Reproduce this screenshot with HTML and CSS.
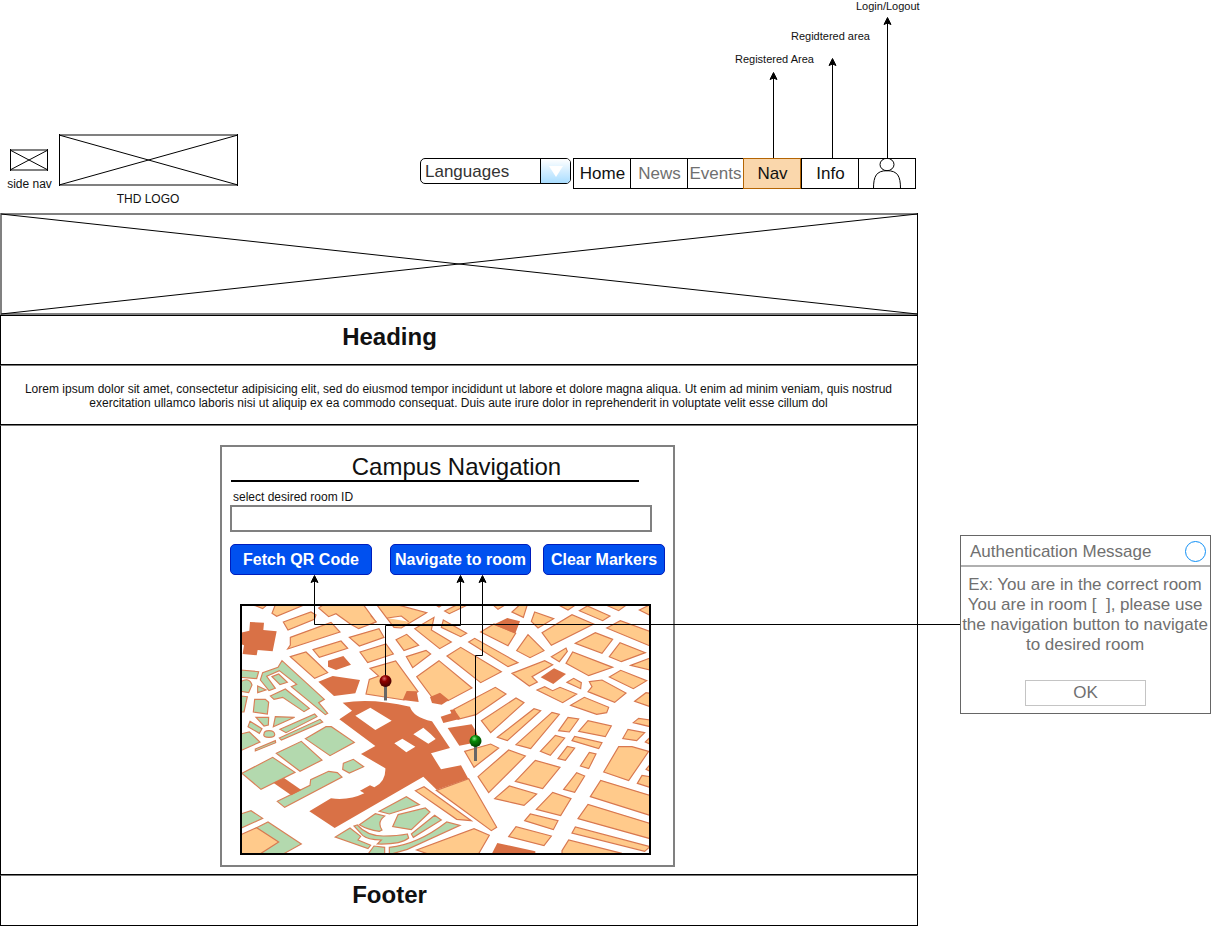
FILE: index.html
```
<!DOCTYPE html>
<html lang="en">
<head>
<meta charset="utf-8">
<title>Campus Navigation</title>
<link rel="stylesheet" href="styles.css">
</head>
<body>
<div class="canvas">
  <div class="site">
    <header class="header">
      <figure class="side-nav">
        <svg width="40" height="24" viewBox="0 0 40 24"><path class="edge" d="M1 2H39M1 22H39"/><path class="line" d="M1.500 1V23M38.500 1V23M1 2L39 22M39 2L1 22"/></svg>
        <figcaption>side nav</figcaption>
      </figure>
      <figure class="logo">
        <svg width="180" height="53" viewBox="0 0 180 53"><path class="edge" d="M0 2H179M0 52H179"/><path class="line" d="M.5 1V53M178.500 1V53M0 2L179 52M179 2L0 52"/></svg>
        <figcaption>THD LOGO</figcaption>
      </figure>
      <div class="select"><span class="select-value">Languages</span><span class="select-arrow"><svg width="14" height="11" viewBox="0 0 14 11"><path d="M0 0H14L7 11Z" fill="#fff"/></svg></span></div>
      <nav class="nav">
        <a class="item">Home</a>
        <a class="item muted">News</a>
        <a class="item muted events">Events</a>
        <a class="item active">Nav</a>
        <a class="item info">Info</a>
        <a class="item user"><svg width="29" height="31" viewBox="0 0 29 31"><ellipse class="line" cx="14" cy="6.500" rx="7" ry="6.200"/><path class="line" d="M.5 30.500C.5 18 3.500 12.700 14 12.700S27.500 18 27.500 30.500"/></svg></a>
      </nav>
    </header>
    <svg class="banner" width="918" height="102" viewBox="0 0 918 102"><path class="edge" d="M0 1H918M0 101H918"/><path class="edge" d="M1 0V102"/><path class="line" d="M917.500 0V102M1 1L917 101M917 1L1 101"/></svg>
    <h1 class="heading">Heading</h1>
    <p class="intro">Lorem ipsum dolor sit amet, consectetur adipisicing elit, sed do eiusmod tempor incididunt ut labore et dolore magna aliqua. Ut enim ad minim veniam, quis nostrud<br>exercitation ullamco laboris nisi ut aliquip ex ea commodo consequat. Duis aute irure dolor in reprehenderit in voluptate velit esse cillum dol</p>
    <main class="main">
      <section class="panel">
        <h2 class="title">Campus Navigation</h2>
        <label class="label">select desired room ID</label>
        <div class="field"></div>
        <div class="buttons">
          <button class="btn fetch">Fetch QR Code</button>
          <button class="btn navigate">Navigate to room</button>
          <button class="btn clear">Clear Markers</button>
        </div>
        <svg class="map" width="411" height="251" viewBox="240 604 411 251">
          <rect x="240" y="604" width="411" height="251" fill="#fff"/>
          <g transform="translate(236 600) scale(.33333)">
            <path class="land" d="M50 14L80 26 94 14ZM118 14L108 40 122 49 206 14ZM142 66L225 36 240 45 235 58 156 90ZM163 112L285 67 312 96 155 147 163 135ZM262 14L248 24 278 50 300 41 343 72 368 86 420 66 382 14ZM340 112L429 86 444 112 370 138ZM231 149L315 123 335 145 250 172ZM372 156L450 132 472 162 395 188ZM163 170L210 156 275 218 236 235Z"/>
            <path class="brown" d="M42 66L84 68 82 90 122 94 110 154 65 150 62 166 20 162 24 136 14 132 14 98 40 92ZM276 182L322 168 345 194 300 210 276 200ZM247 245L290 228 372 240 358 280 294 288Z"/>
            <path class="green" fill-rule="evenodd" d="M138 182L265 298 248 308 275 340 268 344 166 260 182 253 130 212 92 229 118 265 99 272 73 240 80 218 126 202ZM108 230L128 222 154 247 132 254ZM14 210L68 215 62 236 14 232ZM14 245Q40 230 48 255L38 278 14 274ZM65 258L90 270 65 278ZM14 288L34 290 24 336 14 336ZM103 288L148 267 220 325 204 335 140 292 114 298ZM56 298L88 298 98 307 94 342 52 336ZM60 352L98 352 97 375 84 378ZM118 350L176 352 112 380ZM42 364L78 386 70 400 36 380ZM132 388L236 342 243 350 150 398ZM130 414L252 358 260 366 136 420Z"/>
          </g>
          <g transform="translate(374 600) scale(.33333)">
            <path class="land" d="M8 14L35 50 60 82 82 84 158 38 68 14ZM40 54L82 48 104 65M-10 46L6 65 -10 72M66 119L98 103 134 136 90 152ZM122 86L180 52 172 90 232 126 197 146ZM208 60L278 100 260 110 202 82ZM212 33L250 14 282 14 226 41ZM184 14L195 21 206 14ZM97 170L156 151 170 162 116 203ZM-12 205L65 183 132 275 90 300 -24 282 -14 238 14 228ZM128 230L195 182 294 264 222 302 174 292ZM219 168L260 142 382 215 320 248ZM284 126L302 115 432 188 402 200ZM320 96L360 72 425 100 402 137ZM240 328L364 262 396 282 306 344 252 358ZM322 362L426 294 450 308 350 398ZM356 14L372 28 395 14Z"/>
            <path class="brown" d="M86 300L98 273 128 274 134 306ZM168 291L198 278 225 300 203 314 174 309ZM200 350L232 340 228 330 240 328 260 356 208 369ZM358 74L400 54 438 64 424 100Z"/>
          </g>
          <g transform="translate(512 600) scale(.33333)">
            <path class="land" d="M0 36L24 14H46L34 52ZM68 36L125 56 78 84 58 64ZM90 98L180 44 245 72 118 136ZM138 14L168 30 192 14ZM202 32L226 18 294 48 272 62ZM280 14L320 32 342 16ZM284 84L325 62 414 94V138ZM382 30L414 14V46ZM14 152L48 104 96 152 54 173ZM190 130L250 98 302 118 270 160ZM292 170L324 128 400 158 328 185ZM118 170L162 144 166 154 142 185ZM162 190L182 156 302 202 230 227ZM0 220L98 182 122 194 60 230 76 246 52 258ZM75 270L98 260 122 272 144 262 194 282 152 308ZM165 247L185 235 208 248 206 266ZM232 245L270 240 342 279 308 307 228 275 240 260ZM292 231L326 211 404 242 364 266ZM356 196L414 174V210ZM368 304L402 278 414 280V320ZM176 316L217 292 290 322 284 338 254 343ZM364 368L380 355 414 360V380Z"/>
            <path class="brown" d="M86 232L126 205 162 222 124 252Z"/>
          </g>
          <g transform="translate(236 728) scale(.33333)">
            <path class="green" d="M14 18L40 12 72 42 14 68ZM84 18Q84 8 99 8T116 18 99 28 84 18ZM58 63L118 38 119 44 58 69ZM208 32L270 -4 286 -4 355 43 282 83ZM121 76L196 40 258 96 192 130ZM18 136L110 88 177 133 75 184ZM124 220L222 172 224 155 278 130 304 134 318 147 146 238ZM322 106L352 94 383 116 340 135 320 124ZM14 258L45 248 80 271 14 301ZM60 300L96 282 196 348 142 378H60ZM298 327L342 300 374 325 366 336 404 352 396 362ZM370 290L418 257 446 264Q422 282 438 306L430 310Q395 305 370 290Z"/>
            <path class="brown" d="M112 164L144 150 196 186 166 202Z"/>
            <path class="land" d="M14 320L62 299 128 342 66 382 14 382Z"/>
          </g>
          <g transform="translate(306 690) scale(.33333)">
            <path class="brown" d="M110 38Q200 24 312 50Q320 80 378 94L432 174 375 190 405 238 465 226 487 266 392 299 352 260 86 414 10 364 75 325Q130 332 175 310L162 302 192 286 205 292Q240 275 238 235L165 192 208 168 100 88 138 62Z"/>
            <path fill="#fff" d="M148 77L193 53 257 92 208 120ZM265 160L289 146 328 170 301 187ZM322 133L352 113 374 132 389 147 367 161Z"/>
            <path class="brown" d="M425 114L497 103 510 124 520 155 460 167Z"/>
          </g>
          <g transform="translate(374 728) scale(.33333)">
            <path class="land" d="M187 187L284 152 368 298 352 308ZM124 188L150 176 292 278 248 274ZM272 70L350 48 374 60 300 118ZM312 146L404 66 454 84 344 194ZM362 212L406 174 488 198 450 232 414 224ZM370 28L480 -58 500 -52 400 38ZM180 384L128 366 300 302 346 322 310 384ZM404 326L426 296 532 324 510 353Z"/>
            <path class="green" d="M16 250L97 206 136 230 46 258ZM72 260L154 240 168 252 112 305 56 296ZM112 318L182 262 202 276 118 328ZM46 358Q130 350 218 282L258 292 100 364 46 380ZM-60 294L-50 291Q-20 325 30 324 70 324 100 318L104 330Q80 350 10 348L22 336Q-20 335 -34 322ZM-19 380L0 354 32 358V380Z"/>
            <path class="brown" d="M352 380L370 345 484 370 484 380Z"/>
          </g>
          <g transform="translate(512 728) scale(.33333)">
            <path class="land" d="M12 50L120 -47 142 -41 56 62ZM85 70L130 22 158 30 115 82ZM138 92L166 55 188 60 160 97ZM140 8L168 -32 200 -27 172 12ZM200 10L228 -22 298 -6 280 26ZM180 38L188 25 270 44 260 62ZM205 114L232 73 252 78 230 122ZM155 184L194 134 218 144 188 193ZM10 160L70 97 144 118 92 182ZM73 244L122 193 177 212 146 263ZM38 278L55 258 138 278 124 305ZM332 32L348 4 398 14 374 38ZM400 42L414 28V48ZM275 132L320 56H360L410 70 350 158ZM376 166L390 142 414 146V178ZM402 124L414 110V130ZM235 206L266 157 414 202V262ZM198 272L228 229 414 286V332ZM180 315L190 297 414 356 398 370ZM150 368L170 336 330 376 150 380Z"/>
          </g>
          <rect x="241" y="605" width="409" height="249" fill="none" stroke="#000" stroke-width="2"/>
        </svg>
      </section>
    </main>
    <footer class="footer">Footer</footer>
  </div>
  <aside class="dialog">
    <div class="dialog-head"><span>Authentication Message</span><svg width="22" height="22" viewBox="0 0 22 22"><circle cx="11.500" cy="10.500" r="10" fill="none" stroke="#0f8ff5"/></svg></div>
    <p class="message">Ex: You are in the correct room<br>You are in room [&nbsp; ], please use<br>the navigation button to navigate<br>to desired room</p>
    <button class="ok">OK</button>
  </aside>

  <svg class="connectors" width="1211" height="926" viewBox="0 0 1211 926">
    <defs>
      <radialGradient id="red" cx=".4" cy=".3" r=".7"><stop offset="0" stop-color="#d66"/><stop offset=".35" stop-color="#900000"/><stop offset="1" stop-color="#400"/></radialGradient>
      <radialGradient id="grn" cx=".4" cy=".3" r=".7"><stop offset="0" stop-color="#8e8"/><stop offset=".35" stop-color="#088a08"/><stop offset="1" stop-color="#040"/></radialGradient>
      <path id="tip" stroke="#000" stroke-linejoin="round" d="M0 .5L3.500 7.500 0 6 -3.500 7.500Z"/>
    </defs>
    <path class="line" d="M773.500 76V158M832.500 62V158M887.500 20V158M960 624.500H314.500V580M385.500 676V625.500H460.500V580M475.500 736V655.500H482.500V580"/>
    <use href="#tip" x="773.500" y="72"/><use href="#tip" x="832.500" y="58"/><use href="#tip" x="887.500" y="17"/>
    <use href="#tip" x="314.500" y="575"/><use href="#tip" x="460.500" y="575"/><use href="#tip" x="482.500" y="575"/>
    <path d="M385.500 684V700.500M475.500 744V761" stroke="#666" stroke-width="3"/>
    <circle cx="385.500" cy="681" r="6" fill="url(#red)"/>
    <circle cx="475.500" cy="741" r="6" fill="url(#grn)"/>
  </svg>
  <span class="note note-nav">Registered Area</span>
  <span class="note note-info">Regidtered area</span>
  <span class="note note-user">Login/Logout</span>
</div>
</body>
</html>
```
FILE: styles.css
```
* { box-sizing: border-box; }
body, figure, h1, h2, p { margin: 0; }
body { background: #fff; color: #111; font-family: "Liberation Sans", Arial, sans-serif; font-size: 12px; }
svg { display: block; }
.line { fill: none; stroke: #000; stroke-width: 1; }
.edge { fill: none; stroke: #808080; stroke-width: 2; }

.canvas { position: relative; display: flex; align-items: flex-start; width: 1211px; height: 926px; overflow: hidden; }
.site { width: 918px; flex: none; }

.header { display: flex; align-items: flex-start; height: 213px; padding-top: 133px; }
.side-nav { width: 59px; padding-top: 15px; }
.side-nav svg { margin-left: 9px; }
.side-nav figcaption { text-align: center; line-height: 14px; margin-top: 5px; }
.logo { width: 180px; }
.logo figcaption { text-align: center; line-height: 14px; margin-top: 6px; padding-right: 2px; }

.select { display: flex; width: 151px; height: 26px; margin: 25px 2px 0 181px; border: 1px solid #000; border-radius: 5px; overflow: hidden; font-size: 17px; line-height: 25px; }
.select-value { width: 119px; padding-left: 4px; color: #333; }
.select-arrow { flex: 1; border-left: 1px solid #000; background: linear-gradient(#fff, #a9ddff); padding: 7px 0 0 8px; }

.nav { display: flex; margin-top: 25px; width: 343px; height: 31px; border: 1px solid #000; font-size: 17px; line-height: 29px; }
.item { flex: none; width: 57px; height: 29px; padding-left: 1px; text-align: center; border-right: 1px solid #000; }
.muted { color: #707070; }
.events { width: 55px; padding-left: 0; border-right: 0; }
.active { width: 58px; height: 31px; margin-top: -1px; line-height: 29px; background: #fad7ac; border: 1px solid #b46504; }
.info { width: 58px; border-left: 1px solid #000; }
.user { width: 56px; border-right: 0; padding-left: 14px; }
.user svg { margin-top: -1px; }

.heading { height: 50px; border: 1px solid #000; padding-right: 139px; text-align: center; font-size: 24px; line-height: 41px; }
.intro { height: 60px; border: 1px solid #000; border-top-color: #777; padding: 16px 1px 0 0; text-align: center; line-height: 14px; white-space: nowrap; }
.main { height: 450px; border: 1px solid #000; border-top-color: #777; padding: 19px 0 0 219px; }
.panel { width: 455px; height: 422px; border: 2px solid #808080; padding: 0 0 0 8px; }
.title { width: 408px; height: 35px; margin-left: 1px; padding-left: 43px; border-bottom: 2px solid #000; text-align: center; font-weight: 400; font-size: 24px; line-height: 39px; }
.label { display: block; height: 23px; padding: 8px 0 0 3px; line-height: 14px; }
.field { width: 422px; height: 27px; border: 2px solid #808080; }
.buttons { display: flex; align-items: flex-start; height: 72px; padding-top: 12px; }
.btn { height: 31px; margin: 0; padding: 0; border: 1px solid #001dbc; border-radius: 5px; background: #0050ef; color: #fff; font: bold 16px/29px "Liberation Sans", Arial, sans-serif; letter-spacing: .03px; white-space: nowrap; }
.fetch { width: 142px; margin-right: 18px; }
.navigate { width: 141px; margin-right: 12px; }
.clear { width: 122px; }
.map { margin-left: 10px; }
.land { fill: #ffca8b; stroke: #d87850; stroke-width: 3.500; }
.green { fill: #b3d9ae; stroke: #d88058; stroke-width: 3.500; }
.brown { fill: #d97146; }
.footer { height: 51px; border: 1px solid #000; border-top-color: #777; padding-right: 139px; text-align: center; font-size: 24px; font-weight: 700; line-height: 37px; }

.dialog { display: flex; flex-direction: column; align-items: center; width: 251px; height: 179px; margin: 535px 0 0 42px; border: 1px solid #666; color: #707070; font-size: 17px; }
.dialog-head { display: flex; align-items: center; justify-content: space-between; width: 100%; height: 31px; padding: 2px 4px 0 9px; border-bottom: 2px solid #b0b0b0; }
.message { margin-top: 8px; padding-right: 1px; text-align: center; line-height: 20px; white-space: nowrap; }
.ok { width: 121px; height: 26px; margin-top: 25px; padding: 0; border: 1px solid #c4c4c4; background: #fff; color: #707070; font: 17px/24px "Liberation Sans", Arial, sans-serif; }

.connectors { position: absolute; left: 0; top: 0; pointer-events: none; }
.note { position: absolute; font-size: 11px; line-height: 13px; white-space: nowrap; }
.note-nav { left: 735px; top: 53px; }
.note-info { left: 791px; top: 30px; }
.note-user { left: 856px; top: 0; }
```
